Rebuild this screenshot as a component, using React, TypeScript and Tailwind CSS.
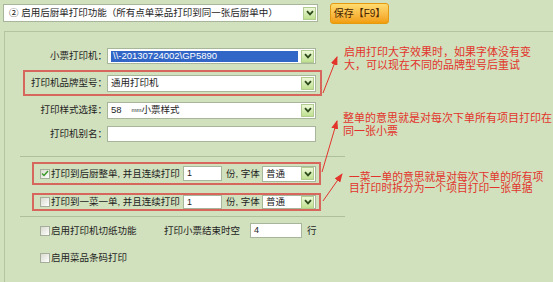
import React from "react";
import clsx from "clsx";

// select box with the green xp-style drop arrow
const DropArrow = () => (
  <span className="flex h-[13px] w-[13px] shrink-0 items-center justify-center border border-[#b2cc90] bg-linear-to-b from-[#eef8d8] to-[#bfe08f]">
    <svg width="8" height="6" viewBox="0 0 8 6">
      <path d="M1 1.2 L4 4.4 L7 1.2" fill="none" stroke="#2c4a1c" strokeWidth="1.8" />
    </svg>
  </span>
);

interface SelectProps {
  className?: string;
  selected?: boolean;
  children?: React.ReactNode;
}

const Select: React.FC<SelectProps> = ({ className, selected, children }) => (
  <div
    className={clsx(
      "flex items-center border border-[#a7b69b] bg-white pr-[1px]",
      className
    )}
  >
    <div
      className={clsx(
        "flex min-w-0 flex-1 items-center overflow-hidden whitespace-nowrap",
        selected ? "mx-[3px] h-[11px] bg-[#3166c6] pl-[2px] text-white" : "pl-[3px]"
      )}
    >
      {children}
    </div>
    <DropArrow />
  </div>
);

const Input: React.FC<{ className?: string; value?: string }> = ({
  className,
  value,
}) => (
  <div
    className={clsx(
      "flex items-center border border-[#a7b69b] bg-white pl-[3px] text-[9px]",
      className
    )}
  >
    {value}
  </div>
);

const Checkbox: React.FC<{ checked?: boolean }> = ({ checked }) => (
  <span className="flex h-[10px] w-[10px] shrink-0 items-center justify-center border border-[#a5ae9b] bg-linear-to-br from-[#d9dacf] to-white">
    {checked && (
      <svg width="8" height="7" viewBox="0 0 8 7">
        <path d="M1 3.5 L3 5.5 L7 1" fill="none" stroke="#3a9a2a" strokeWidth="1.5" />
      </svg>
    )}
  </span>
);

const App: React.FC = () => {
  const red = "#e2342b";

  return (
    <div className="relative h-[282px] w-[553px] overflow-hidden bg-[#d1e0bd] font-['Liberation_Sans','Noto_Sans_CJK_SC',sans-serif] text-[9.5px] leading-none text-[#1e1e1e]">
      {/* top bar */}
      <div className="flex h-[31px] items-start pl-[3px] pt-[4px]">
        <Select className="h-[18px] w-[315px] text-[9.5px]">
          <span className="pl-[2px]">② 启用后厨单打印功能（所有点单菜品打印到同一张后厨单中）</span>
        </Select>
        <button className="-mt-px ml-[12px] h-[21px] w-[59px] rounded-[3px] border border-[#e39a10] bg-linear-to-b from-[#ffdc6e] to-[#f29e06] text-[10px] text-[#4a2600]">
          保存【F9】
        </button>
      </div>

      {/* settings panel */}
      <div className="ml-[4px] h-[251px] border-l border-t border-[#b3c4a2] pt-[14px]">
        <div className="ml-[18px] flex h-[20px] w-[299px] items-center border-2 border-transparent">
          <span className="w-[82px] text-right">小票打印机：</span>
          <Select className="h-[16px] w-[209px]" selected>
            \\-20130724002\GP5890
          </Select>
        </div>

        <div className="ml-[18px] mt-[4px] flex h-[26px] w-[299px] items-center border-2 border-[#d7675d]">
          <span className="w-[82px] text-right">打印机品牌型号：</span>
          <Select className="h-[17px] w-[209px]">通用打印机</Select>
        </div>

        <div className="ml-[18px] mt-[4px] flex h-[20px] w-[299px] items-center border-2 border-transparent">
          <span className="w-[82px] text-right">打印样式选择：</span>
          <Select className="h-[17px] w-[209px]">
            58<span className="ml-[10px] text-[6px]">mm</span>小票样式
          </Select>
        </div>

        <div className="ml-[18px] mt-[4px] flex h-[20px] w-[299px] items-center border-2 border-transparent">
          <span className="w-[82px] text-right">打印机别名：</span>
          <Input className="h-[16px] w-[209px]" />
        </div>

        <div className="ml-[15px] mt-[12px] h-px w-[325px] bg-[#adbf9b]" />

        <div className="ml-[27px] mt-[5px] flex h-[23px] w-[289px] items-center border-2 border-[#d7675d] pl-[6px]">
          <Checkbox checked />
          <span className="ml-[1px] w-[132px] whitespace-nowrap">打印到后厨整单, 并且连续打印</span>
          <Input className="h-[15px] w-[39px]" value="1" />
          <span className="ml-[4px] w-[36px] whitespace-nowrap">份, 字体</span>
          <Select className="h-[16px] w-[54px]">普通</Select>
        </div>

        <div className="ml-[27px] mt-[8px] flex h-[18px] w-[289px] items-center border-2 border-[#d7675d] pl-[6px]">
          <Checkbox />
          <span className="ml-[1px] w-[132px] whitespace-nowrap">打印到一菜一单, 并且连续打印</span>
          <Input className="h-[14px] w-[39px]" value="1" />
          <span className="ml-[4px] w-[36px] whitespace-nowrap">份, 字体</span>
          <Select className="h-[14px] w-[54px]">普通</Select>
        </div>

        <div className="ml-[15px] mt-[5px] h-px w-[325px] bg-[#adbf9b]" />

        <div className="ml-[35px] mt-[6px] flex h-[15px] items-center">
          <Checkbox />
          <span className="ml-[1px] w-[113px] whitespace-nowrap">启用打印机切纸功能</span>
          <span className="w-[86px] whitespace-nowrap">打印小票结束时空</span>
          <Input className="h-[15px] w-[52px]" value="4" />
          <span className="ml-[5px]">行</span>
        </div>

        <div className="ml-[35px] mt-[12px] flex h-[15px] items-center">
          <Checkbox />
          <span className="ml-[1px] whitespace-nowrap">启用菜品条码打印</span>
        </div>
      </div>

      {/* annotations laid over the screenshot */}
      <svg className="pointer-events-none absolute left-0 top-0" width="553" height="282">
        <defs>
          <marker id="ah" markerWidth="9" markerHeight="7" refX="8" refY="3.5" orient="auto" markerUnits="userSpaceOnUse">
            <path d="M0 0 L9 3.5 L0 7 Z" fill={red} />
          </marker>
        </defs>
        <line x1="323" y1="93" x2="337" y2="57" stroke={red} strokeWidth="1" markerEnd="url(#ah)" />
        <line x1="322" y1="172" x2="337" y2="121" stroke={red} strokeWidth="1" markerEnd="url(#ah)" />
        <line x1="323" y1="201" x2="342" y2="174" stroke={red} strokeWidth="1" markerEnd="url(#ah)" />
      </svg>

      <div className="absolute left-[344px] top-[46px] text-[11px] leading-[13px] text-[#e2342b]">
        启用打印大字效果时，如果字体没有变
        <br />
        大，可以现在不同的品牌型号后重试
      </div>
      <div className="absolute left-[343px] top-[112px] text-[11px] leading-[13px] text-[#e2342b]">
        整单的意思就是对每次下单所有项目打印在
        <br />
        同一张小票
      </div>
      <div className="absolute left-[349px] top-[172px] text-[10.8px] leading-[11px] text-[#e2342b]">
        一菜一单的意思就是对每次下单的所有项
        <br />
        目打印时拆分为一个项目打印一张单据
      </div>
    </div>
  );
};

export default App;
